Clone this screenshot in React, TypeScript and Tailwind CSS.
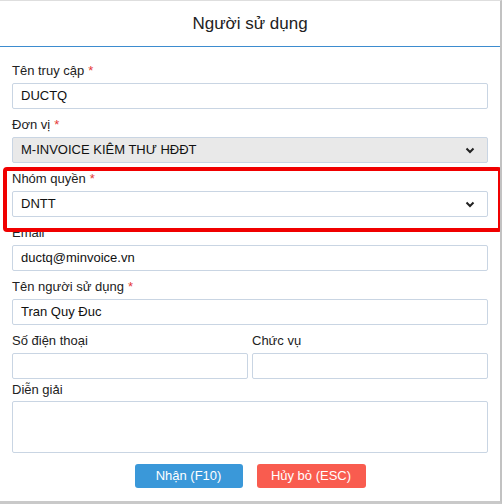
import React from "react";

const font = { fontFamily: '"Liberation Sans", Arial, sans-serif' };

function Label({ text, req, h = "h-[28px]", pb = "pb-[3px]" }: { text: string; req?: boolean; h?: string; pb?: string }) {
  return (
    <div className={`${h} ${pb} flex items-end text-[13px] text-[#222]`}>
      <span>{text}</span>
      {req && <span className="ml-[4px] text-[#e53935]">*</span>}
    </div>
  );
}

function Input({ value, gray }: { value?: string; gray?: boolean }) {
  return (
    <div
      className={`h-[26px] border border-[#c9d5e3] rounded-[2px] flex items-center px-[8px] text-[13px] text-[#111] ${
        gray ? "bg-[#e9e9e9]" : "bg-white"
      }`}
    >
      {value}
    </div>
  );
}

function Chevron() {
  return (
    <svg width="10" height="7" viewBox="0 0 10 7" className="text-[#222]">
      <path d="M1.5 1.5 L5 5 L8.5 1.5" fill="none" stroke="currentColor" strokeWidth="2" />
    </svg>
  );
}

function Select({ value, gray }: { value: string; gray?: boolean }) {
  return (
    <div
      className={`h-[26px] border border-[#c9d5e3] rounded-[2px] flex items-center justify-between pl-[8px] pr-[12px] text-[13px] text-[#111] ${
        gray ? "bg-[#e9e9e9]" : "bg-white"
      }`}
    >
      <span>{value}</span>
      <Chevron />
    </div>
  );
}

export default function App() {
  return (
    <div
      className="relative w-[502px] h-[504px] bg-white border-t border-[#dedede] border-r-2 border-r-[#c2c2c2] border-b-[3px] border-b-[#c9c9c9] overflow-hidden"
      style={font}
    >
      <div className="h-[46px] flex items-center justify-center text-[17px] text-[#222] border-b border-[#3d8ccf]">
        Người sử dụng
      </div>
      <div className="px-[12px] pt-[8px]">
        <Label text="Tên truy cập" req />
        <Input value="DUCTQ" />
        <Label text="Đơn vị" req />
        <Select value="M-INVOICE KIÊM THƯ HĐĐT" gray />
        <Label text="Nhóm quyền" req />
        <Select value="DNTT" />
        <Label text="Email" />
        <Input value="ductq@minvoice.vn" />
        <Label text="Tên người sử dụng" req />
        <Input value="Tran Quy Đuc" />
        <div className="grid grid-cols-[236px_236px] gap-x-[4px]">
          <div>
            <Label text="Số điện thoại" />
            <Input />
          </div>
          <div>
            <Label text="Chức vụ" />
            <Input />
          </div>
        </div>
        <Label text="Diễn giải" h="h-[22px]" pb="pb-[2px]" />
        <div className="h-[52px] border border-[#c9d5e3] rounded-[2px] bg-white" />
        <div className="flex justify-center gap-[14px] mt-[11px]">
          <button className="w-[108px] h-[24px] rounded-[3px] bg-[#3a98d9] text-white text-[13px]">
            Nhận (F10)
          </button>
          <button className="w-[109px] h-[24px] rounded-[3px] bg-[#f95c4f] text-white text-[13px]">
            Hủy bỏ (ESC)
          </button>
        </div>
      </div>
      <div className="absolute left-[3px] top-[166px] w-[499px] h-[65px] border-[4px] border-[#f00000] rounded-[4px] pointer-events-none" />
    </div>
  );
}
